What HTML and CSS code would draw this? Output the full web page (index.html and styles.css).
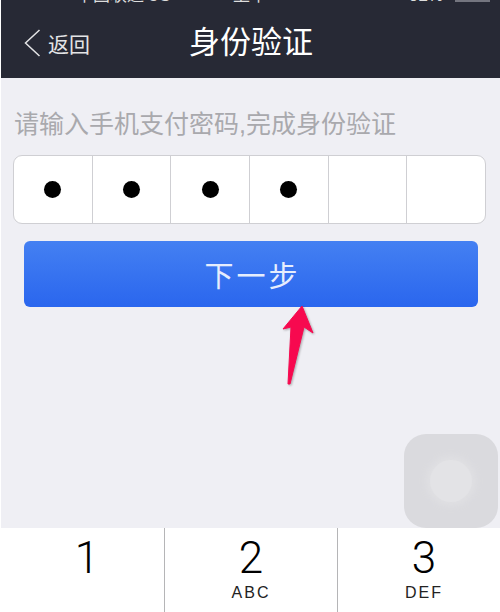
FILE: index.html
```html
<!DOCTYPE html>
<html lang="zh-CN">
<head>
<meta charset="utf-8">
<title>身份验证</title>
<link rel="stylesheet" href="styles.css">
</head>
<body>
<div class="screen">
  <header class="header">
    <div class="status">
      <span class="carrier">中国联通 3G</span>
      <span class="time">上午</span>
      <span class="right">92%</span>
      <i class="battery"></i>
    </div>
    <div class="nav">
      <a class="back">
        <svg class="chev" width="17" height="28" viewBox="0 0 17 28"><path d="M15.500 1 L1.500 14 L15.500 27" fill="none" stroke="#e4e4e6" stroke-width="1.500"/></svg>
        <span>返回</span>
      </a>
      <h1 class="title">身份验证</h1>
    </div>
  </header>
  <main class="content">
    <p class="hint">请输入手机支付密码,完成身份验证</p>
    <div class="pin">
      <div class="cell"><b class="dot"></b></div>
      <div class="cell"><b class="dot"></b></div>
      <div class="cell"><b class="dot"></b></div>
      <div class="cell"><b class="dot"></b></div>
      <div class="cell"></div>
      <div class="cell"></div>
    </div>
    <button class="next">下一步</button>
    <svg class="arrow" width="40" height="88" viewBox="0 0 40 88"><path d="M21 1 L32 28 L23 22 L9 79 L7 79 L10 22 L2 24 Z" fill="#f7094f" stroke="#f7094f" stroke-linejoin="round"/></svg>
    <div class="assist"><span class="assist-core"></span></div>
  </main>
  <section class="keys">
    <div class="key key-one"><span class="num">1</span></div>
    <div class="key"><span class="num">2</span><span class="let">ABC</span></div>
    <div class="key key-last"><span class="num">3</span><span class="let">DEF</span></div>
  </section>
</div>
</body>
</html>
```
FILE: styles.css
```css
html, body { margin: 0; padding: 0; }
body { width: 500px; height: 612px; overflow: hidden; background: #fff; font-family: "Liberation Sans", "Noto Sans CJK SC", sans-serif; }
.screen { width: 500px; height: 612px; display: flex; flex-direction: column; padding-left: 1px; box-sizing: border-box; }
.header { height: 78px; background: #272935; color: #fff; overflow: hidden; flex: none; }
.status { height: 3px; position: relative; overflow: hidden; font-size: 17px; color: #ddd; }
.status span { position: absolute; bottom: -3px; line-height: 20px; white-space: nowrap; }
.carrier { left: 75px; }
.time { left: 232px; }
.right { left: 408px; }
.battery { position: absolute; left: 454px; top: 0; width: 35px; height: 2px; background: #74757f; }
.nav { height: 75px; display: flex; align-items: center; position: relative; padding-top: 5px; box-sizing: border-box; }
.back { display: flex; align-items: center; gap: 7px; margin-left: 23px; font-size: 21px; color: #e4e4e6; }
.title { position: absolute; left: 188px; top: 22px; margin: 0; font-size: 31px; line-height: 36px; font-weight: 400; color: #fff; }
.content { flex: 1; background: #efeff4; position: relative; padding: 0 13px; min-height: 0; }
.hint { margin: 31px 0 0; font-size: 25px; line-height: 30px; color: #a9a9ad; white-space: nowrap; }
.pin { margin: 16px 0 0 -1px; height: 69px; display: flex; background: #fff; border: 1px solid #cfcfd3; border-radius: 9px; width: 473px; box-sizing: border-box; overflow: hidden; }
.cell { flex: 1; display: flex; align-items: center; justify-content: center; border-right: 1px solid #cfcfd3; }
.cell:last-child { border-right: 0; }
.dot { width: 17px; height: 17px; border-radius: 50%; background: #000; }
.next { display: block; margin: 17px 0 0 10px; width: 454px; height: 66px; border: 0; border-radius: 6px; background: linear-gradient(#4480f2, #2a66ee); color: #e6edfd; font: 400 29px "Liberation Sans", "Noto Sans CJK SC", sans-serif; letter-spacing: 3px; padding: 0 0 0 3px; }
.arrow { position: absolute; left: 280px; top: 227px; filter: drop-shadow(1px 1px 1px rgba(0, 0, 0, .3)); }
.assist { position: absolute; left: 403px; top: 356px; width: 94px; height: 94px; border-radius: 22px; background: #dadade; display: flex; align-items: center; justify-content: center; }
.assist-core { width: 42px; height: 42px; border-radius: 50%; background: #e3e3e6; box-shadow: 0 0 8px 3px #e1e1e4; }
.keys { height: 84px; flex: none; display: flex; background: #fff; }
.key { display: flex; flex-direction: column; align-items: center; width: 173px; border-right: 1px solid #b5b5b7; box-sizing: border-box; font-family: Roboto, "Liberation Sans", sans-serif; }
.key-one { width: 164px; padding-left: 9px; }
.key-last { flex: 1; border-right: 0; padding-left: 10px; }
.num { font-size: 44px; font-weight: 300; line-height: 46px; margin-top: 7px; color: #000; }
.let { font-family: "Liberation Sans", sans-serif; font-size: 16px; line-height: 18px; letter-spacing: 2px; color: #222; margin-top: 3px; }
```
